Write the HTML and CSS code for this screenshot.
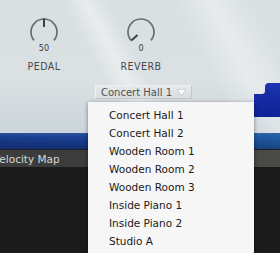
FILE: index.html
```html
<!DOCTYPE html>
<html>
<head>
<meta charset="utf-8">
<link rel="stylesheet" href="styles.css">
</head>
<body>
<div class="screen">
  <div class="panel">
    <div class="streak s1"></div>
    <div class="streak s2"></div>
    <svg class="puzzle" width="26" height="36" viewBox="0 0 26 36">
      <defs>
        <linearGradient id="pg" x1="0" y1="0" x2="0" y2="1">
          <stop offset="0" stop-color="#1c34b0"/>
          <stop offset="1" stop-color="#0f2296"/>
        </linearGradient>
      </defs>
      <path d="M0 11 L8 11 Q11 11 11 8 L11 4 Q11 0 15 0 L26 0 L26 34 L0 34 Z" fill="url(#pg)"/>
    </svg>
    <div class="knobs">
      <div class="knob">
        <svg class="dial" width="30" height="30" viewBox="0 0 30 30">
          <path d="M5.04 23.36 A13 13 0 1 1 24.96 23.36" fill="none" stroke="#6a6d6f" stroke-width="1.7"/>
          <line x1="15" y1="1.5" x2="15" y2="10" stroke="#3e4042" stroke-width="2"/>
        </svg>
        <div class="value">50</div>
        <div class="label">PEDAL</div>
      </div>
      <div class="knob">
        <svg class="dial" width="30" height="30" viewBox="0 0 30 30">
          <path d="M5.04 23.36 A13 13 0 1 1 24.96 23.36" fill="none" stroke="#6a6d6f" stroke-width="1.7"/>
          <line x1="5.4" y1="23.6" x2="11.5" y2="18" stroke="#3e4042" stroke-width="2"/>
        </svg>
        <div class="value">0</div>
        <div class="label">REVERB</div>
      </div>
    </div>
    <div class="select">
      <span class="select-text">Concert Hall 1</span>
      <svg class="arrow" width="9" height="7" viewBox="0 0 9 7"><path d="M0.5 0.5 L8.5 0.5 L4.5 6.5 Z" fill="#ffffff" stroke="#b9bdbf" stroke-width="0.6"/></svg>
    </div>
  </div>
  <div class="bluebar"></div>
  <div class="tabbar">
    <div class="tab">Velocity Map</div>
  </div>
  <div class="dark"></div>

  <ul class="menu">
    <li>Concert Hall 1</li>
    <li>Concert Hall 2</li>
    <li>Wooden Room 1</li>
    <li>Wooden Room 2</li>
    <li>Wooden Room 3</li>
    <li>Inside Piano 1</li>
    <li>Inside Piano 2</li>
    <li>Studio A</li>
  </ul>
</div>
</body>
</html>
```

FILE: styles.css
```css
html, body {
  margin: 0;
  padding: 0;
  background: #1b1b1b;
}

.screen {
  position: relative;
  width: 280px;
  height: 253px;
  overflow: hidden;
  font-family: "DejaVu Sans", sans-serif;
}

.panel {
  position: relative;
  height: 133px;
  overflow: hidden;
  background: linear-gradient(180deg, #d9e0e2 0%, #dbe1e3 60%, #cbd5da 100%);
}

.streak {
  position: absolute;
  top: -40px;
  height: 240px;
  transform: rotate(-28deg);
  transform-origin: top left;
}

.s1 {
  left: 40px;
  width: 40px;
  background: linear-gradient(90deg, rgba(255,255,255,0) 0%, rgba(255,255,255,0.4) 50%, rgba(255,255,255,0) 100%);
}

.s2 {
  left: 150px;
  width: 70px;
  background: linear-gradient(90deg, rgba(255,255,255,0) 0%, rgba(255,255,255,0.35) 50%, rgba(255,255,255,0) 100%);
}

.puzzle {
  position: absolute;
  right: 0;
  top: 83px;
}

.knobs {
  position: relative;
  display: flex;
  gap: 47px;
  padding: 17px 0 0 19px;
}

.knob {
  width: 50px;
  display: flex;
  flex-direction: column;
  align-items: center;
}

.dial {
  display: block;
}

.value {
  height: 10px;
  margin-top: -4px;
  line-height: 10px;
  font-family: "DejaVu Sans Condensed", "DejaVu Sans", sans-serif;
  font-size: 9px;
  color: #3a3c3e;
}

.label {
  margin-top: 7px;
  line-height: 12px;
  font-family: "DejaVu Sans Condensed", "DejaVu Sans", sans-serif;
  font-size: 10.5px;
  letter-spacing: 0.5px;
  color: #45484a;
}

.select {
  position: relative;
  margin: 13px 0 0 95px;
  width: 97px;
  height: 14px;
  box-sizing: border-box;
  border: 1px solid #c3c8ca;
  border-top-color: #eef0f1;
  border-left-color: #eef0f1;
  background: linear-gradient(180deg, #e6e9ea 0%, #d9dddf 100%);
  display: flex;
  align-items: center;
  padding-left: 5px;
}

.select-text {
  font-size: 10px;
  line-height: 11px;
  color: #4e5254;
  flex: 1;
}

.arrow {
  display: block;
  margin-right: 5px;
}

.bluebar {
  height: 16px;
  background:
    linear-gradient(180deg, rgba(80,120,200,0.35) 0%, rgba(0,0,0,0) 30%, rgba(0,0,30,0.25) 100%),
    linear-gradient(90deg, #173b8c 0%, #1a4393 50%, #1f5aa0 100%);
}

.tabbar {
  height: 17px;
  border-top: 1px solid #202020;
  background: linear-gradient(90deg, #3c3c3c 0%, #3c3c3c 60%, #4b4b48 100%);
  overflow: hidden;
}

.tab {
  margin-left: -7px;
  line-height: 18px;
  font-size: 10.5px;
  color: #d8d8d8;
}

.dark {
  height: 120px;
  background: #1b1b1b;
}

.menu {
  position: absolute;
  left: 88px;
  top: 102px;
  width: 166px;
  height: 170px;
  margin: 0;
  padding: 4px 0 0 0;
  list-style: none;
  background: #f6f6f6;
  box-shadow: 0 1px 4px rgba(0,0,0,0.45);
}

.menu li {
  height: 18px;
  line-height: 18px;
  padding-left: 21px;
  font-size: 10.5px;
  color: #1a1a1a;
}
```
